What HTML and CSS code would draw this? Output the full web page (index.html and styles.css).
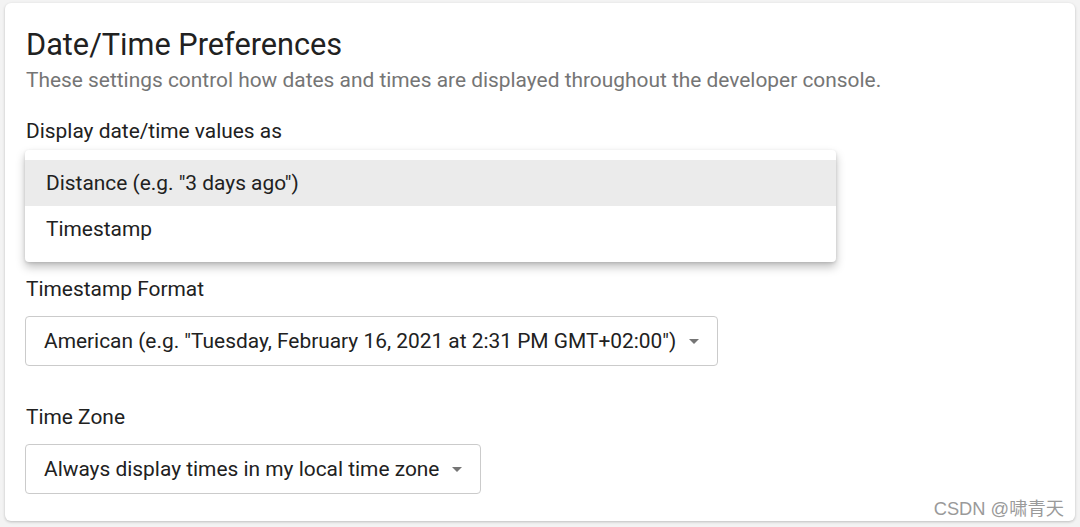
FILE: index.html
```html
<!DOCTYPE html>
<html lang="en">
<head>
<meta charset="utf-8">
<title>Date/Time Preferences</title>
<link rel="stylesheet" href="styles.css">
</head>
<body>
<div class="card">
  <h1 class="title">Date/Time Preferences</h1>
  <p class="subtitle">These settings control how dates and times are displayed throughout the developer console.</p>

  <div class="field field-first">
    <div class="label">Display date/time values as</div>
    <div class="select-anchor">
      <div class="select select-hidden">
        <span class="select-text">Distance (e.g. "3 days ago")</span>
        <span class="arrow"></span>
      </div>
      <div class="menu">
        <div class="menu-item active">Distance (e.g. "3 days ago")</div>
        <div class="menu-item">Timestamp</div>
      </div>
    </div>
  </div>

  <div class="field field-second">
    <div class="label">Timestamp Format</div>
    <div class="select">
      <span class="select-text">American (e.g. "Tuesday, February 16, 2021 at 2:31 PM GMT+02:00")</span>
      <span class="arrow"></span>
    </div>
  </div>

  <div class="field field-third">
    <div class="label">Time Zone</div>
    <div class="select">
      <span class="select-text">Always display times in my local time zone</span>
      <span class="arrow"></span>
    </div>
  </div>

  <div class="watermark">CSDN @啸青天</div>
</div>
</body>
</html>
```

FILE: styles.css
```css
* { box-sizing: border-box; }

html, body {
  margin: 0;
  padding: 0;
}

body {
  background: #f3f3f3;
  font-family: Roboto, "Noto Sans CJK SC", sans-serif;
  color: #212121;
  padding: 3px 5px 6px 5px;
  width: 1080px;
  height: 527px;
  overflow: hidden;
}

.card {
  position: relative;
  background: #ffffff;
  border-radius: 6px;
  box-shadow: 0 1px 3px rgba(0, 0, 0, 0.22);
  height: 518px;
  padding: 24px 20px 0 20px;
}

.title {
  margin: 0;
  font-size: 30.7px;
  font-weight: 400;
  line-height: 36px;
  color: #212121;
  padding-left: 1px;
}

.subtitle {
  margin: 5px 0 0 0;
  font-size: 20.9px;
  line-height: 24px;
  color: #757575;
  padding-left: 1px;
}

.field {
  display: flex;
  flex-direction: column;
  align-items: flex-start;
}

.label {
  font-size: 20.9px;
  line-height: 24px;
  color: #212121;
  padding-left: 1px;
}

.field-first {
  margin-top: 27px;
}

.field-second {
  margin-top: 69px;
}

.field-third {
  margin-top: 39px;
}

.select-anchor {
  position: relative;
  width: 100%;
  margin-top: 15px;
}

.select {
  margin-top: 15px;
  height: 50px;
  border: 1px solid #cbcbcb;
  border-radius: 4px;
  display: flex;
  align-items: center;
  padding: 0 18px 0 18px;
  gap: 13px;
  background: #fff;
}

.select-hidden {
  margin-top: 0;
  visibility: hidden;
}

.select-text {
  font-size: 20.9px;
  color: #212121;
  white-space: nowrap;
}

.arrow {
  width: 0;
  height: 0;
  border-left: 5px solid transparent;
  border-right: 5px solid transparent;
  border-top: 5px solid #757575;
  margin-top: 1px;
}

.menu {
  position: absolute;
  left: 0;
  top: -8px;
  width: 811px;
  background: #ffffff;
  border-radius: 4px;
  padding: 10px 0;
  box-shadow: 0 5px 10px rgba(0, 0, 0, 0.25), 0 1px 3px rgba(0, 0, 0, 0.12);
  z-index: 2;
}

.menu-item {
  height: 46px;
  display: flex;
  align-items: center;
  padding-left: 21px;
  font-size: 20.9px;
  color: #212121;
}

.menu-item.active {
  background: #ebebeb;
}

.watermark {
  position: absolute;
  right: 11px;
  bottom: 1px;
  font-size: 18.3px;
  color: #9a9a9a;
  font-family: "Liberation Sans", "Noto Sans CJK SC", sans-serif;
}
```
